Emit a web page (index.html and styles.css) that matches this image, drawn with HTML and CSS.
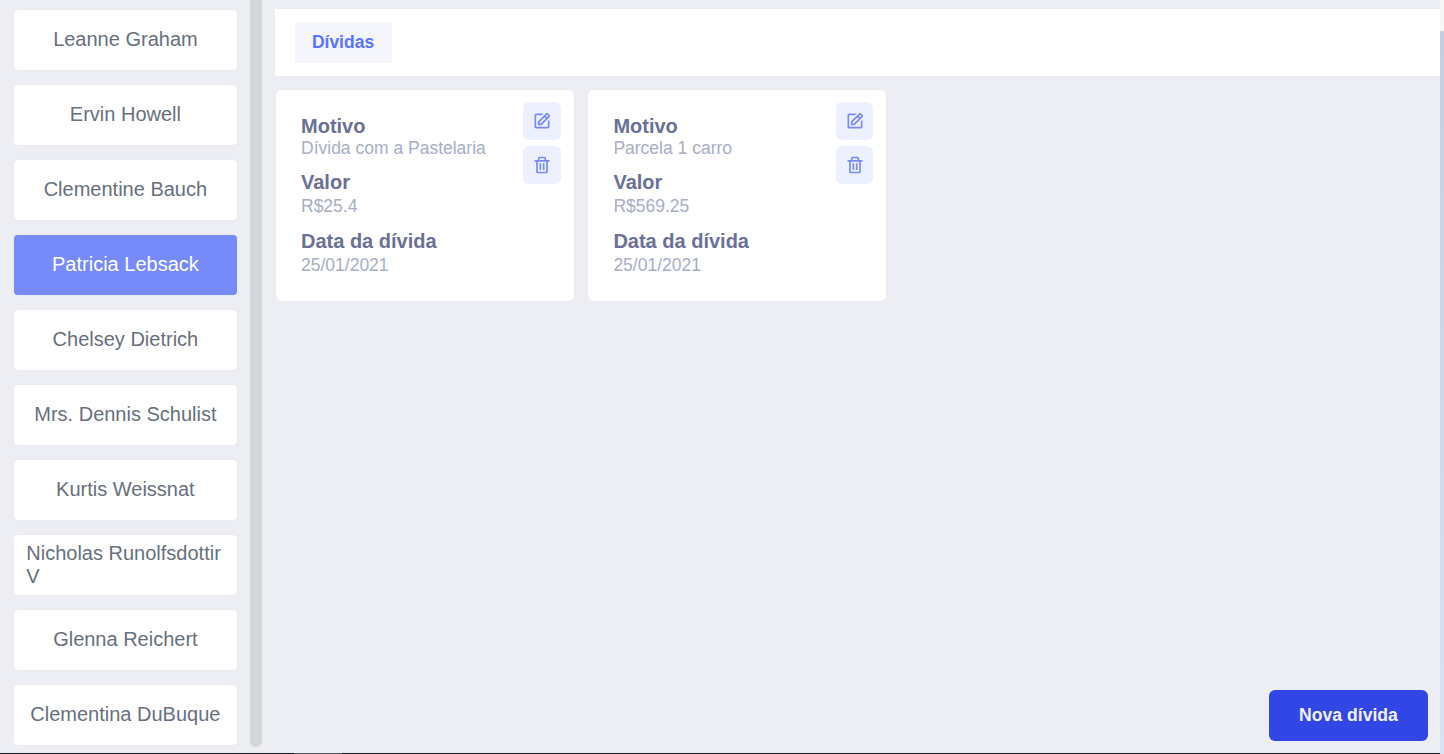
FILE: index.html
```html
<!DOCTYPE html>
<html lang="pt-BR">
<head>
<meta charset="utf-8">
<title>Dívidas</title>
<link rel="stylesheet" href="styles.css">
</head>
<body>
<svg class="sprite" aria-hidden="true">
  <symbol id="edit" viewBox="0 0 24 24"><path d="m7 17.013 4.413-.015 9.632-9.54c.378-.378.586-.88.586-1.414s-.208-1.036-.586-1.414l-1.586-1.586c-.756-.756-2.075-.752-2.825-.003L7 12.583v4.43zM18.045 4.458l1.589 1.583-1.597 1.582-1.586-1.585 1.594-1.58zM9 13.417l6.03-5.973 1.586 1.586-6.029 5.971L9 15.006v-1.589z"/><path d="M5 21h14c1.103 0 2-.897 2-2v-8.668l-2 2V19H8.158c-.026 0-.053.01-.079.01-.033 0-.066-.009-.1-.01H5V5h6.847l2-2H5c-1.103 0-2 .897-2 2v14c0 1.103.897 2 2 2z"/></symbol>
  <symbol id="trash" viewBox="0 0 24 24"><path d="M5 20a2 2 0 0 0 2 2h10a2 2 0 0 0 2-2V8h2V6h-4V4a2 2 0 0 0-2-2H9a2 2 0 0 0-2 2v2H3v2h2zM9 4h6v2H9zM8 8h9v12H7V8z"/><path d="M9 10h2v8H9zm4 0h2v8h-2z"/></symbol>
</svg>
<div class="app">
  <aside class="clients">
    <button class="client">Leanne Graham</button>
    <button class="client">Ervin Howell</button>
    <button class="client">Clementine Bauch</button>
    <button class="client client--active">Patricia Lebsack</button>
    <button class="client">Chelsey Dietrich</button>
    <button class="client">Mrs. Dennis Schulist</button>
    <button class="client">Kurtis Weissnat</button>
    <button class="client">Nicholas Runolfsdottir V</button>
    <button class="client">Glenna Reichert</button>
    <button class="client">Clementina DuBuque</button>
  </aside>
  <div class="divider"></div>
  <main class="content">
    <header class="topbar"><span class="tab">Dívidas</span></header>
    <section class="cards">
      <article class="card">
        <dl class="details">
          <dt>Motivo</dt><dd class="reason">Dívida com a Pastelaria</dd>
          <dt>Valor</dt><dd>R$25.4</dd>
          <dt>Data da dívida</dt><dd>25/01/2021</dd>
        </dl>
        <div class="actions">
          <button class="action" aria-label="Editar"><svg><use href="#edit"/></svg></button>
          <button class="action" aria-label="Excluir"><svg><use href="#trash"/></svg></button>
        </div>
      </article>
      <article class="card">
        <dl class="details">
          <dt>Motivo</dt><dd class="reason">Parcela 1 carro</dd>
          <dt>Valor</dt><dd>R$569.25</dd>
          <dt>Data da dívida</dt><dd>25/01/2021</dd>
        </dl>
        <div class="actions">
          <button class="action" aria-label="Editar"><svg><use href="#edit"/></svg></button>
          <button class="action" aria-label="Excluir"><svg><use href="#trash"/></svg></button>
        </div>
      </article>
    </section>
    <button class="new-debt">Nova dívida</button>
  </main>
  <div class="scrollbar"><div class="thumb"></div></div>
</div>
<footer class="edge"><div class="edge-mark"></div></footer>
</body>
</html>
```
FILE: styles.css
```css
* { box-sizing: border-box; }
body {
  margin: 0;
  height: 754px;
  overflow: hidden;
  position: relative;
  background: #edeef4;
  font-family: "Liberation Sans", Arial, sans-serif;
}
button { border: 0; font-family: inherit; }
.sprite { display: none; }
.app { display: flex; height: 754px; }
.clients {
  width: 250px;
  padding: 10px 13px 0 14px;
  display: flex;
  flex-direction: column;
  gap: 15px;
}
.client {
  height: 60px;
  flex: none;
  display: flex;
  align-items: center;
  justify-content: center;
  padding: 0 12.5px 1px 12.3px;
  border-radius: 4px;
  background: #fff;
  box-shadow: 0 0 1px rgba(0, 0, 0, .12);
  color: #67707d;
  font-size: 20px;
  line-height: 23px;
  text-align: left;
}
.client--active { background: #768afa; color: #fff; }
.divider {
  width: 12px;
  height: 747px;
  background: #d5d6da;
  border-radius: 0 0 6px 6px;
}
.content {
  flex: 1;
  padding: 9px 0 13px 13px;
  display: flex;
  flex-direction: column;
}
.topbar {
  height: 67px;
  padding: 13px 20px;
  background: #fff;
}
.tab {
  display: block;
  width: 97px;
  height: 41px;
  padding-right: 1px;
  background: #f5f6fc;
  color: #5b74fb;
  font-size: 17.5px;
  font-weight: bold;
  line-height: 40px;
  text-align: center;
}
.cards { display: flex; gap: 14.4px; padding: 14px 0 0 1px; }
.card {
  width: 298px;
  height: 211px;
  padding: 12px 13px 0 25px;
  display: flex;
  justify-content: space-between;
  background: #fff;
  border-radius: 5px;
  box-shadow: 0 0 1px rgba(0, 0, 0, .12);
}
.details { margin: 0; padding-top: 12px; }
.details dt {
  color: #6a7096;
  font-size: 20px;
  font-weight: bold;
  line-height: 24px;
}
.details dd {
  margin: 0 0 11px;
  color: #a8aec5;
  font-size: 17.5px;
  line-height: 24px;
}
.details .reason { line-height: 21px; }
.actions { display: flex; flex-direction: column; gap: 6px; }
.action {
  width: 37.6px;
  height: 38px;
  padding: 0;
  display: grid;
  place-items: center;
  border-radius: 6px;
  background: #edf1ff;
}
.action svg { width: 20px; height: 20px; fill: #768afa; }
.new-debt {
  width: 159px;
  height: 51px;
  margin: auto 12px 0 auto;
  padding: 0;
  border-radius: 6px;
  background: #3246e5;
  color: #f0f1f5;
  font-size: 17.6px;
  font-weight: bold;
}
.scrollbar { width: 4px; padding-top: 31px; background: #f7f7f7; }
.thumb { height: 723px; background: linear-gradient(#c5cee0, #d9e1f2); border-top: 1px solid #d2d2d2; }
.edge {
  position: absolute;
  left: 0;
  bottom: 0;
  width: 1440px;
  height: 1px;
  padding-left: 294px;
  background: #191a20;
}
.edge-mark { width: 48px; height: 1px; background: #50525a; }
```
